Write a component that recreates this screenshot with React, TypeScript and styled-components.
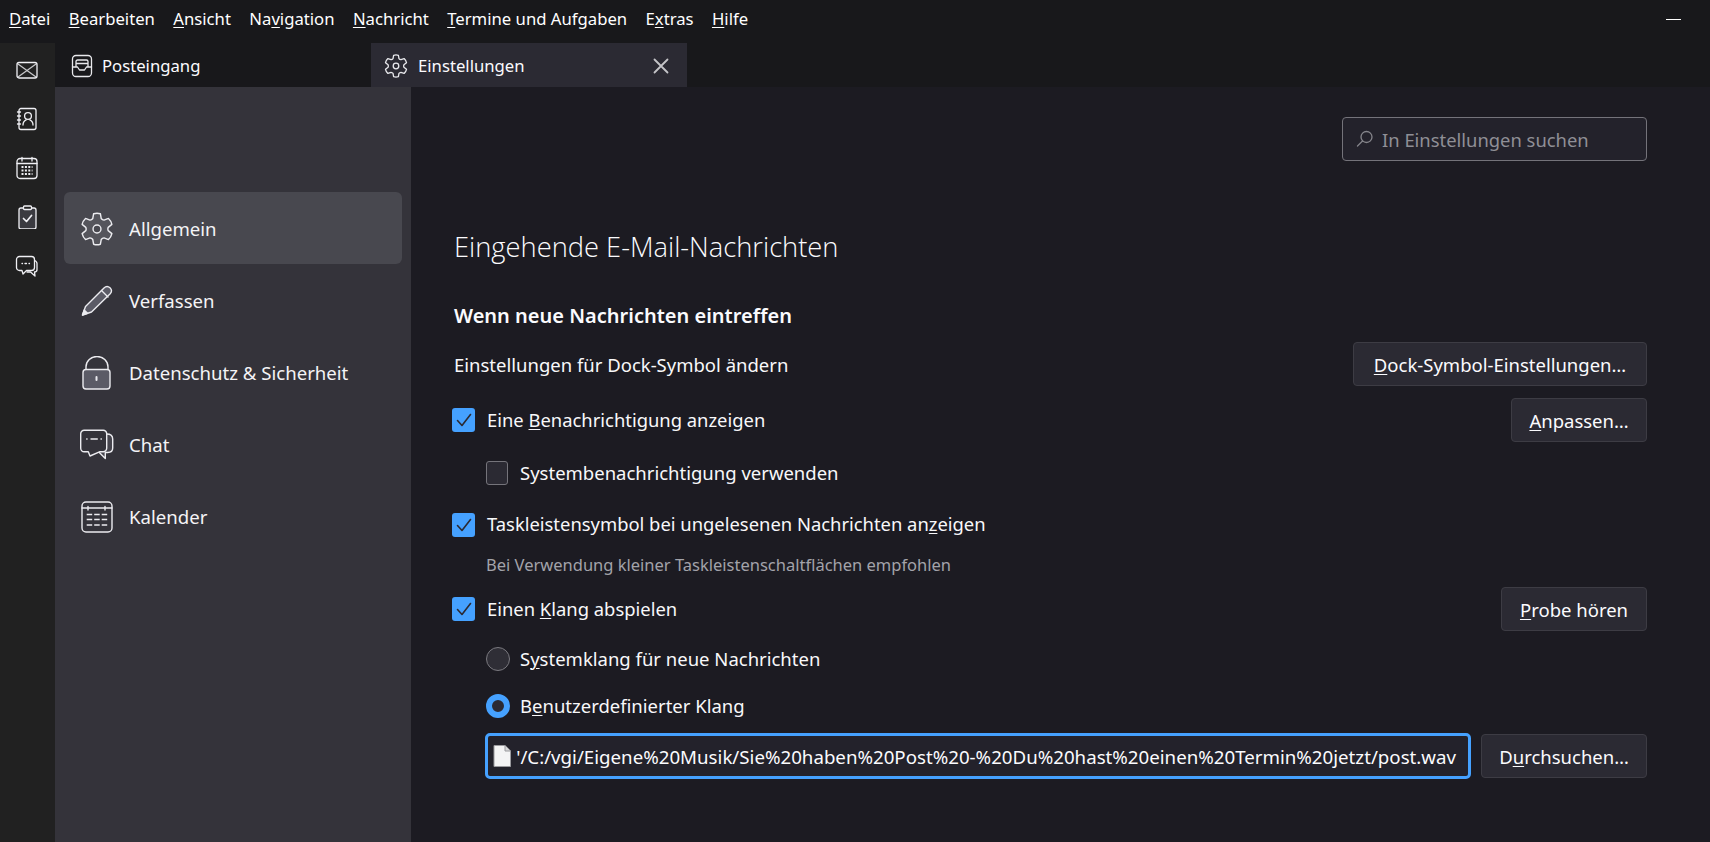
import React from "react";
import styled, { createGlobalStyle } from "styled-components";

const Global = createGlobalStyle`
  html, body { margin: 0; padding: 0; background: #1c1b22; }
  body { width: 1710px; height: 842px; overflow: hidden; font-family: "Noto Sans", "Open Sans", sans-serif; font-size: 18.5px; color: #fbfbfe; }
  * { box-sizing: border-box; }
`;

const Window = styled.div`display: grid; grid-template-columns: 55px 1fr; grid-template-rows: 43px 44px 1fr; width: 1710px; height: 842px;`;
const MenuBar = styled.div`grid-column: 1 / 3; display: flex; align-items: center; background: #18181b; font-size: 16.7px; color: #fff;`;
const MenuItem = styled.span`padding: 0 9.2px 6px; line-height: 37px; &:first-child { padding-left: 9px; }`;
const Key = styled.span`text-decoration: underline; text-underline-offset: 2px; text-decoration-thickness: 1px;`;
const Minimize = styled.div`margin-left: auto; margin-right: 29px; margin-top: -4px; width: 15px; height: 1px; background: #fff;`;
const Spaces = styled.nav`grid-row: 2 / 4; background: #212121; display: flex; flex-direction: column; align-items: center; gap: 25px; padding: 15px 2px 0 0;`;
const SpaceIcon = styled.svg`display: block; width: 24px; height: 24px; fill: none; stroke: #f0f0f4; stroke-width: 1.3; stroke-linejoin: round; stroke-linecap: round; flex: none;`;
const TabStrip = styled.div`display: flex; background: #18181b;`;
const Tab = styled.div<{ $active?: boolean }>`width: 316px; height: 44px; display: flex; align-items: center; gap: ${p => (p.$active ? 10 : 8)}px; padding: 1px 14px 0 ${p => (p.$active ? 13 : 15)}px; background: ${p => (p.$active ? "#2b2a33" : "transparent")}; font-size: 16.7px;`;
const TabIcon = styled.svg`width: 24px; height: 24px; fill: none; stroke: #e8e8ec; stroke-width: 1.3; stroke-linejoin: round; stroke-linecap: round; flex: none;`;
const TabLabel = styled.span`flex: 1;`;
const Body = styled.div`display: flex; min-height: 0; background: #1c1b22;`;
const Sidebar = styled.aside`width: 356px; flex: none; background: #34333a; padding: 105px 9px 0; display: flex; flex-direction: column;`;
const NavItem = styled.div<{ $active?: boolean }>`height: 72px; border-radius: 6px; display: flex; align-items: center; gap: 15px; padding: 1px 0 0 16px; background: ${p => (p.$active ? "#48484f" : "transparent")}; font-size: 18.6px; color: #f4f4f6;`;
const NavIcon = styled.svg`width: 34px; height: 34px; fill: none; stroke: #ececf0; stroke-width: 1.4; stroke-linejoin: round; stroke-linecap: round; flex: none;`;
const Main = styled.main`flex: 1; padding: 30px 63px 0 43px; display: flex; flex-direction: column;`;
const SearchBar = styled.div`align-self: flex-end; width: 305px; height: 44px; border: 1px solid #74737a; border-radius: 4px; background: #23222b; display: flex; align-items: center; gap: 8px; padding-left: 13px; color: #8f8f96; font-size: 18.4px;`;
const SearchIcon = styled.svg`width: 18px; height: 18px; fill: none; stroke: #85858b; stroke-width: 1.3; stroke-linecap: round; flex: none;`;
const Heading = styled.h1`margin: 67px 0 0; font-family: "Open Sans", sans-serif; font-weight: 300; font-size: 27.3px; line-height: 38px; color: #fbfbfe;`;
const SubHeading = styled.h2`margin: 37px 0 0; font-size: 20px; font-weight: 600; line-height: 26px;`;
const Row = styled.div<{ $h?: number; $mt?: number; $indent?: number }>`display: flex; align-items: center; min-height: ${p => p.$h ?? 44}px; margin-top: ${p => p.$mt ?? 0}px; padding-left: ${p => p.$indent ?? 0}px; color: #f8f8fa;`;
const Spacer = styled.div`flex: 1;`;
const Button = styled.button<{ $w: number }>`width: ${p => p.$w}px; height: 44px; flex: none; border: 1px solid #3d3c44; border-radius: 4px; background: #2b2a33; color: #fbfbfe; font: inherit; padding: 0; display: flex; align-items: center; justify-content: center;`;
const Label = styled.span`position: relative; top: -1px; font-size: 18.4px;`;
const Check = styled.div<{ $on?: boolean }>`width: ${p => (p.$on ? 23 : 22)}px; height: 24px; border-radius: 3px; margin-right: ${p => (p.$on ? 12 : 12)}px; margin-left: ${p => (p.$on ? -2 : 0)}px; flex: none; display: flex; align-items: center; justify-content: center; background: ${p => (p.$on ? "#45a1ff" : "#2b2a33")}; border: ${p => (p.$on ? "0" : "1px solid #75747b")};`;
const CheckMark = styled.svg`width: 18px; height: 18px; fill: none; stroke: #2b2a33; stroke-width: 1.6; stroke-linecap: round; stroke-linejoin: round;`;
const Hint = styled.div`margin-top: 16px; padding-left: 32px; line-height: 24px; font-size: 16.5px; color: #a3a3aa;`;
const Radio = styled.div<{ $on?: boolean }>`width: 24px; height: 24px; border-radius: 50%; flex: none; margin-right: 10px; background: ${p => (p.$on ? "#2b2a33" : "#2f2e36")}; border: ${p => (p.$on ? "6px solid #45a1ff" : "1px solid #7a797f")};`;
const FileRow = styled.div`display: flex; align-items: center; gap: 10px; margin-top: 15px; padding-left: 31px;`;
const FileField = styled.div`width: 986px; height: 46px; flex: none; border: 3px solid #45a1ff; border-radius: 5px; background: #23222b; display: flex; align-items: center; padding: 0 12px 0 4px; gap: 4px;`;
const FileIcon = styled.svg`width: 20px; height: 24px; flex: none;`;
const FilePath = styled.div`flex: 1; min-width: 0; display: flex; justify-content: flex-end; white-space: nowrap; font-size: 18.7px;`;

const gearPath = (() => {
  const [ro, ri] = [11, 8];
  const cmds: string[] = [];
  for (let i = 0; i < 6; i++) {
    const a = (i * Math.PI) / 3 - Math.PI / 2;
    const p = (r: number, d: number) => `${(12 + r * Math.cos(a + d)).toFixed(2)} ${(12 + r * Math.sin(a + d)).toFixed(2)}`;
    cmds.push(`${i === 0 ? "M" : "L"}${p(ri, -0.38)}`, `L${p(ro, -0.22)}`, `Q${p(ro + 0.5, 0)} ${p(ro, 0.22)}`, `L${p(ri, 0.38)}`, `Q${p(ri - 0.6, Math.PI / 6)} ${p(ri, Math.PI / 3 - 0.38)}`);
  }
  return cmds.join("") + "Z";
})();

const Checked = () => (
  <Check $on>
    <CheckMark viewBox="0 0 18 18"><path d="M2.5 9.5 7 14.5 15.5 3.5" /></CheckMark>
  </Check>
);

export default function App() {
  return (
    <Window>
      <Global />
      <MenuBar>
        <MenuItem><Key>D</Key>atei</MenuItem>
        <MenuItem><Key>B</Key>earbeiten</MenuItem>
        <MenuItem><Key>A</Key>nsicht</MenuItem>
        <MenuItem>Na<Key>v</Key>igation</MenuItem>
        <MenuItem><Key>N</Key>achricht</MenuItem>
        <MenuItem><Key>T</Key>ermine und Aufgaben</MenuItem>
        <MenuItem>E<Key>x</Key>tras</MenuItem>
        <MenuItem><Key>H</Key>ilfe</MenuItem>
        <Minimize />
      </MenuBar>
      <Spaces>
        <SpaceIcon viewBox="0 0 24 24"><rect x="2" y="4.5" width="20" height="15.5" rx="2" /><path d="M3 6l18 13M21 6 3 19" opacity="0.8" /></SpaceIcon>
        <SpaceIcon viewBox="0 0 24 24"><rect x="4" y="1.5" width="17" height="21" rx="2" /><path d="M2.5 5h3M2.5 9h3M2.5 13h3M2.5 17h3" /><circle cx="13" cy="9" r="3.4" /><path d="M8 18c0-3 1.5-4.5 3.2-5.2M18 18c0-3-1.5-4.5-3.2-5.2" /></SpaceIcon>
        <SpaceIcon viewBox="0 0 24 24"><rect x="2" y="2.5" width="20" height="20" rx="3" /><path d="M2 7.5h20M7 1.5v3.5M17 1.500v3.5" /><path d="M6.5 11h11M6.5 14.5h11M6.5 18h11" strokeDasharray="2 1.4" strokeLinecap="butt" strokeWidth="2" /></SpaceIcon>
        <SpaceIcon viewBox="0 0 24 24"><rect x="4" y="3" width="17" height="21" rx="2" fill="#3a3a40" /><rect x="8.5" y="1" width="8" height="3.5" rx="1" fill="#212121" /><path d="M8.5 13.5l3 3 5-6" strokeWidth="1.7" /></SpaceIcon>
        <SpaceIcon viewBox="0 0 24 24"><path d="M19.500 6.500c1.500.5 2.500 1.500 2.500 3v6c0 1.500-1 2.500-2.500 2.500l.5 4-4.500-4h-3.500" /><path d="M4.500 2.500h12a3 3 0 0 1 3 3v8a3 3 0 0 1-3 3h-5l-3.500 3.500-1-3.500h-2.500a3 3 0 0 1-3-3v-8a3 3 0 0 1 3-3Z" fill="#212121" /><path d="M7 9.500h.5M10 9.500h1.500M14 9.500h.5" /></SpaceIcon>
      </Spaces>
      <TabStrip>
        <Tab>
          <TabIcon viewBox="0 0 24 24"><rect x="2.500" y="1.500" width="19" height="21" rx="3.500" /><path d="M2.500 13h5l2 3h5l2-3h5M6 13V7.500a1.500 1.500 0 0 1 1.500-1.500h9a1.500 1.500 0 0 1 1.500 1.500V13M6 9.500h12" /></TabIcon>
          <TabLabel>Posteingang</TabLabel>
        </Tab>
        <Tab $active>
          <TabIcon viewBox="0 0 24 24"><path d={gearPath} /><circle cx="12" cy="12" r="2.800" /></TabIcon>
          <TabLabel>Einstellungen</TabLabel>
          <TabIcon viewBox="0 0 24 24"><path d="M5.500 5.500l13 13M18.500 5.500l-13 13" stroke="#c4c4c8" strokeWidth="1.800" /></TabIcon>
        </Tab>
      </TabStrip>
      <Body>
        <Sidebar>
          <NavItem $active><NavIcon viewBox="0 0 24 24"><path d={gearPath} fill="#55555c" strokeWidth="1" /><circle cx="12" cy="12" r="2.800" strokeWidth="1" fill="#48484f" /></NavIcon>Allgemein</NavItem>
          <NavItem><NavIcon viewBox="0 0 34 34"><path d="M2.500 31 5.500 22.500 24 4c2-2 4-2 6-.2s2 4 .2 6L11.500 28Z" fill="#5b5b66" /><path d="M21.500 6.500l6.500 6.500" /><path d="M2.500 31l1.700-5 3.300 3.300Z" fill="#ececf0" /></NavIcon>Verfassen</NavItem>
          <NavItem><NavIcon viewBox="0 0 34 34"><path d="M6 13.500V11a11 10.500 0 0 1 22 0v2.500" /><rect x="3" y="13.500" width="27" height="19.500" rx="3" fill="#5b5b66" /><path d="M16.500 21v3" strokeWidth="2" /></NavIcon>Datenschutz &amp; Sicherheit</NavItem>
          <NavItem><NavIcon viewBox="0 0 34 34"><path d="M26.700 6c4 0 6 1.500 6 5v9c0 3-2 4.500-5 4.500h-2.400v6l-7.500-7.500" fill="#46454d" /><path d="M4.200 2.300h19a3.500 3.500 0 0 1 3.500 3.500v14.400a3.500 3.500 0 0 1-3.500 3.500H20l-10 4.300-1.700-4.300H4.200a3.500 3.500 0 0 1-3.500-3.500V5.800a3.500 3.500 0 0 1 3.500-3.500Z" fill="#34333a" /><path d="M6.700 11h.4M11 11h6.300M21 11h.4" /></NavIcon>Chat</NavItem>
          <NavItem><NavIcon viewBox="0 0 34 34"><rect x="2" y="2" width="30" height="30" rx="4" /><path d="M2 8h30M8 6.500v3.500M25 6.500v3.500" /><path d="M6.700 14.500h21M6.700 19.500h21M6.700 25h21" strokeDasharray="5.500 2" strokeLinecap="butt" /></NavIcon>Kalender</NavItem>
        </Sidebar>
        <Main>
          <SearchBar>
            <SearchIcon viewBox="0 0 18 18"><circle cx="10.500" cy="7" r="5.500" /><path d="M6.500 11 1.500 16" /></SearchIcon>
            In Einstellungen suchen
          </SearchBar>
          <Heading>Eingehende E-Mail-Nachrichten</Heading>
          <SubHeading>Wenn neue Nachrichten eintreffen</SubHeading>
          <Row $mt={13}>
            Einstellungen für Dock-Symbol ändern
            <Spacer />
            <Button $w={294}><span><Key>D</Key>ock-Symbol-Einstellungen…</span></Button>
          </Row>
          <Row $mt={12}>
            <Checked />
            <Label>Eine <Key>B</Key>enachrichtigung anzeigen</Label>
            <Spacer />
            <Button $w={136}><span><Key>A</Key>npassen…</span></Button>
          </Row>
          <Row $h={24} $mt={18} $indent={32}>
            <Check />
            Systembenachrichtigung verwenden
          </Row>
          <Row $h={24} $mt={27}>
            <Checked />
            <Label>Taskleistensymbol bei ungelesenen Nachrichten an<Key>z</Key>eigen</Label>
          </Row>
          <Hint>Bei Verwendung kleiner Taskleistenschaltflächen empfohlen</Hint>
          <Row $mt={10}>
            <Checked />
            <Label>Einen <Key>K</Key>lang abspielen</Label>
            <Spacer />
            <Button $w={146}><span><Key>P</Key>robe hören</span></Button>
          </Row>
          <Row $h={24} $mt={15} $indent={32}>
            <Radio />
            S<Key>y</Key>stemklang für neue Nachrichten
          </Row>
          <Row $h={24} $mt={22} $indent={32}>
            <Radio $on />
            B<Key>e</Key>nutzerdefinierter Klang
          </Row>
          <FileRow>
            <FileField>
              <FileIcon viewBox="0 0 20 24"><path d="M2 1.500h11l5.500 5.500v15.500H2Z" fill="#f4f4f5" stroke="#9a9a9e" /><path d="M13 1.500V7h5.500" fill="#d8d8da" stroke="#9a9a9e" /></FileIcon>
              <FilePath>'/C:/vgi/Eigene%20Musik/Sie%20haben%20Post%20-%20Du%20hast%20einen%20Termin%20jetzt/post.wav</FilePath>
            </FileField>
            <Button $w={166}><span>D<Key>u</Key>rchsuchen…</span></Button>
          </FileRow>
        </Main>
      </Body>
    </Window>
  );
}
